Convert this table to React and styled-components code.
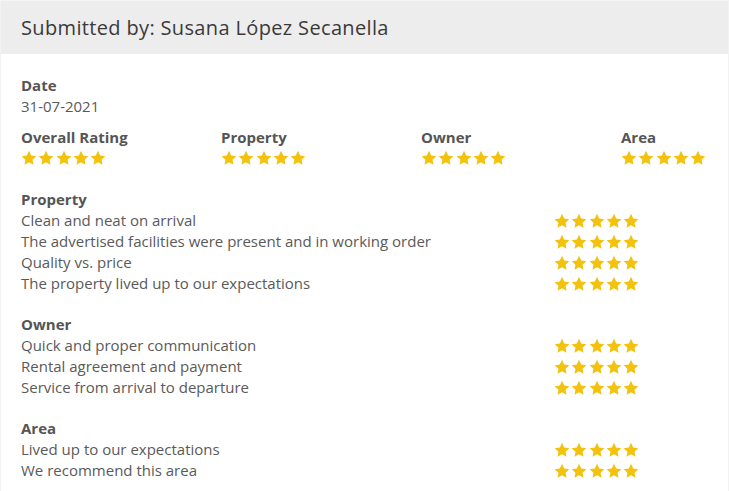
import React from "react";
import styled, { createGlobalStyle } from "styled-components";

const Global = createGlobalStyle`
  html, body { margin: 0; padding: 0; background: #fff; }
  body { font-family: "Open Sans", "Liberation Sans", sans-serif; }
`;

const Card = styled.div`
  width: 729px;
  box-sizing: border-box;
  border-left: 1px solid #f2f2f2;
  border-right: 1px solid #f2f2f2;
  min-height: 491px;
  overflow: hidden;
`;

const Header = styled.div`
  height: 54px;
  background: #ededed;
  display: flex;
  align-items: center;
  padding: 0 20px;
  border-top: 1px solid #f4f4f4;
  box-sizing: border-box;
`;

const Title = styled.h1`
  margin: 0;
  font-size: 20px;
  font-weight: 400;
  color: #3a3a3a;
  letter-spacing: 0.35px;
`;

const Body = styled.div`
  padding: 21px 20px 10px 20px;
  color: #5a5a5a;
  font-size: 15px;
  line-height: 21px;
`;

const Label = styled.div`
  font-weight: 700;
  color: #555;
`;

const Text = styled.div`
  color: #5a5a5a;
  white-space: nowrap;
`;

const Summary = styled.div`
  display: grid;
  grid-template-columns: 200px 200px 200px auto;
  margin-top: 10px;
`;

const SummaryCell = styled.div`
  display: flex;
  flex-direction: column;
`;

const StarsWrap = styled.div`
  display: flex;
  gap: 1.25px;
  align-items: center;
  height: ${(p) => p.$h || 21}px;
`;

const Section = styled.div`
  margin-top: ${(p) => p.$mt}px;
`;

const Row = styled.div`
  display: grid;
  grid-template-columns: 533px auto;
  align-items: center;
`;

const Star = () => (
  <svg width="16" height="16" viewBox="0 0 24 24">
    <path
      fill="#f2c20f"
      d="M12 1.2l3.3 7.1 7.7.9-5.7 5.3 1.5 7.7L12 18.3l-6.8 3.9 1.5-7.7L1 9.2l7.7-.9z"
    />
  </svg>
);

const Stars = ({ h }) => (
  <StarsWrap $h={h}>
    {[0, 1, 2, 3, 4].map((i) => (
      <Star key={i} />
    ))}
  </StarsWrap>
);

const sections = [
  {
    title: "Property",
    mt: 21,
    items: [
      "Clean and neat on arrival",
      "The advertised facilities were present and in working order",
      "Quality vs. price",
      "The property lived up to our expectations",
    ],
  },
  {
    title: "Owner",
    mt: 20,
    items: [
      "Quick and proper communication",
      "Rental agreement and payment",
      "Service from arrival to departure",
    ],
  },
  {
    title: "Area",
    mt: 20,
    items: ["Lived up to our expectations", "We recommend this area"],
  },
];

export default function App() {
  return (
    <>
      <Global />
      <Card>
        <Header>
          <Title>Submitted by: Susana López Secanella</Title>
        </Header>
        <Body>
          <Label>Date</Label>
          <Text>31-07-2021</Text>
          <Summary>
            {["Overall Rating", "Property", "Owner", "Area"].map((t) => (
              <SummaryCell key={t}>
                <Label>{t}</Label>
                <Stars h={20} />
              </SummaryCell>
            ))}
          </Summary>
          {sections.map((s) => (
            <Section key={s.title} $mt={s.mt}>
              <Label>{s.title}</Label>
              {s.items.map((it) => (
                <Row key={it}>
                  <Text>{it}</Text>
                  <Stars />
                </Row>
              ))}
            </Section>
          ))}
        </Body>
      </Card>
    </>
  );
}
